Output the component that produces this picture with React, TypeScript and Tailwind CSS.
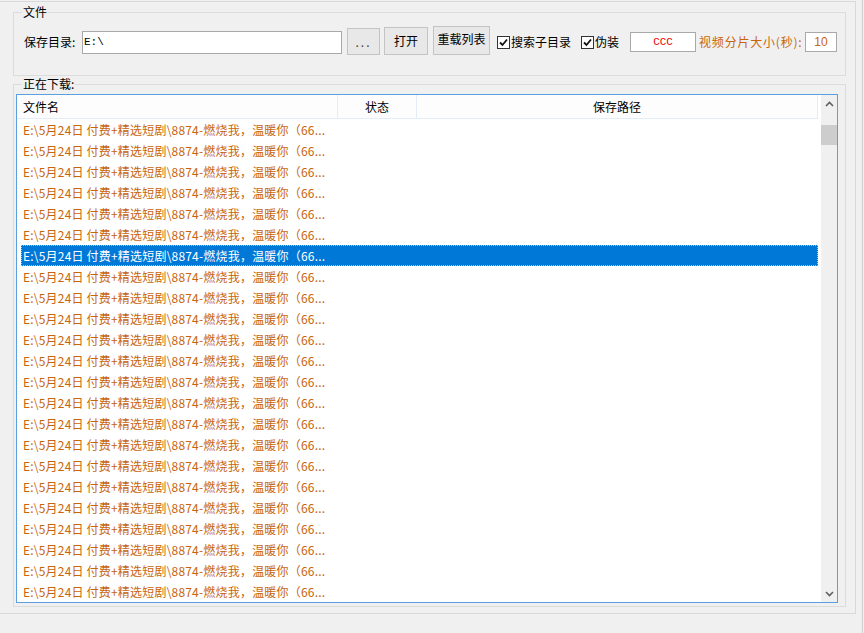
const ROW_TEXT = 'E:\\5月24日 付费+精选短剧\\8874-燃烧我，温暖你（66...';
const ROWS = Array.from({ length: 23 }, (_, i) => i);
const SELECTED = 6;

const cjk = "font-['Noto_Sans_CJK_SC','Noto_Sans',sans-serif]";
const mono = "font-['Liberation_Mono',monospace]";

function Check() {
  return (
    <div className="w-[13px] h-[13px] border border-[#333] bg-white flex items-center justify-center">
      <svg width="9" height="9" viewBox="0 0 9 9">
        <path d="M1 4.5 L3.5 7 L8 1.5" stroke="#111" strokeWidth="1.8" fill="none" />
      </svg>
    </div>
  );
}

function Chevron({ down }: { down?: boolean }) {
  return (
    <svg width="9" height="6" viewBox="0 0 9 6">
      <path
        d={down ? 'M1 1 L4.5 4.5 L8 1' : 'M1 5 L4.5 1.5 L8 5'}
        stroke="#606060"
        strokeWidth="1.6"
        fill="none"
      />
    </svg>
  );
}

export default function App() {
  return (
    <div className={`w-[864px] h-[633px] bg-[#f0f0f0] flex overflow-hidden text-[12px] text-black ${cjk}`}>
      <div className="w-[856px] h-[613px] mt-[1px] border-t border-r border-b border-[#d9d9d9] flex flex-col">
        {/* 文件 */}
        <div className="relative ml-[13px] mt-[10px] w-[833px] h-[64px] border border-[#dcdcdc]">
          <span className="absolute -top-[9px] left-[8px] px-[1px] bg-[#f0f0f0] leading-[16px]">文件</span>
          <div className="flex items-start mt-[13px] pl-[10px]">
            <span className="w-[58px] mt-[8px] leading-[16px]">保存目录:</span>
            <div className={`w-[260px] h-[23px] mt-[5px] border border-[#a9a9a9] bg-white pl-[1px] text-[11px] leading-[21px] ${mono}`}>
              E:\
            </div>
            <button className="ml-[5px] mt-[2px] w-[33px] h-[27px] border border-[#c4c4c4] bg-[#e8e8e8] text-[#444] leading-[25px] tracking-[2px]">
              ...
            </button>
            <button className="ml-[4px] mt-[1px] w-[44px] h-[28px] border border-[#c4c4c4] bg-[#e8e8e8] leading-[26px]">
              打开
            </button>
            <button className="ml-[5px] w-[57px] h-[29px] border border-[#c4c4c4] bg-[#e8e8e8] leading-[24px] pb-[3px]">
              重载列表
            </button>
            <div className="ml-[7px] mt-[10px]">
              <Check />
            </div>
            <span className="ml-[1px] mt-[8px] leading-[16px]">搜索子目录</span>
            <div className="ml-[10px] mt-[10px]">
              <Check />
            </div>
            <span className="ml-[1px] mt-[8px] leading-[16px]">伪装</span>
            <div className={`ml-[11px] mt-[6px] w-[66px] h-[20px] border border-[#a9a9a9] bg-white text-center text-[#f00000] text-[11px] leading-[18px] ${mono}`}>
              CCC
            </div>
            <span className="ml-[3px] mt-[8px] w-[102px] leading-[16px] text-[#c8650c] whitespace-nowrap tracking-[0.8px]">视频分片大小(秒):</span>
            <div className="ml-[4px] mt-[6px] w-[32px] h-[20px] border border-[#a9a9a9] bg-white text-center text-[#c8650c] text-[12px] leading-[18px] font-['Liberation_Sans',sans-serif]">
              10
            </div>
          </div>
        </div>

        {/* 正在下载 */}
        <div className="relative ml-[13px] mt-[8px] w-[833px] h-[523px] border border-[#dcdcdc]">
          <span className="absolute -top-[9px] left-[8px] px-[1px] bg-[#f0f0f0] leading-[16px]">正在下载:</span>
          <div className="ml-[2px] mt-[9px] w-[822px] h-[509px] border border-[#5a9fe0] bg-white flex overflow-hidden">
            <div className="w-[801px] flex flex-col">
              <div className="h-[24px] flex border-b border-[#e3edf9] bg-[#fdfdfd] leading-[23px]">
                <div className="w-[321px] border-r border-[#e3edf9] pl-[6px]">文件名</div>
                <div className="w-[79px] border-r border-[#e3edf9] text-center">状态</div>
                <div className="flex-1 border-r border-[#e3edf9] text-center">保存路径</div>
              </div>
              {ROWS.map((i) => (
                <div
                  key={i}
                  className={
                    i === SELECTED
                      ? 'ml-[4px] pl-[2px] h-[21px] leading-[21px] shrink-0 whitespace-nowrap tracking-[0.2px] bg-[#0078d7] text-white outline-1 outline-dotted outline-offset-[-1px] outline-[#9cc7ef]'
                      : 'ml-[4px] pl-[2px] h-[21px] leading-[21px] shrink-0 whitespace-nowrap tracking-[0.2px] text-[#c8650c]'
                  }
                >
                  {ROW_TEXT}
                </div>
              ))}
            </div>
            <div className="w-[3px]" />
            <div className="w-[16px] bg-[#f0f0f0] flex flex-col">
              <div className="h-[17px] flex items-center justify-center">
                <Chevron />
              </div>
              <div className="mt-[13px] h-[20px] bg-[#cdcdcd]" />
              <div className="flex-1" />
              <div className="h-[17px] flex items-center justify-center">
                <Chevron down />
              </div>
            </div>
          </div>
        </div>
      </div>
      <div className="ml-[6px] w-[1px] bg-[#cfcfcf]" />
    </div>
  );
}
